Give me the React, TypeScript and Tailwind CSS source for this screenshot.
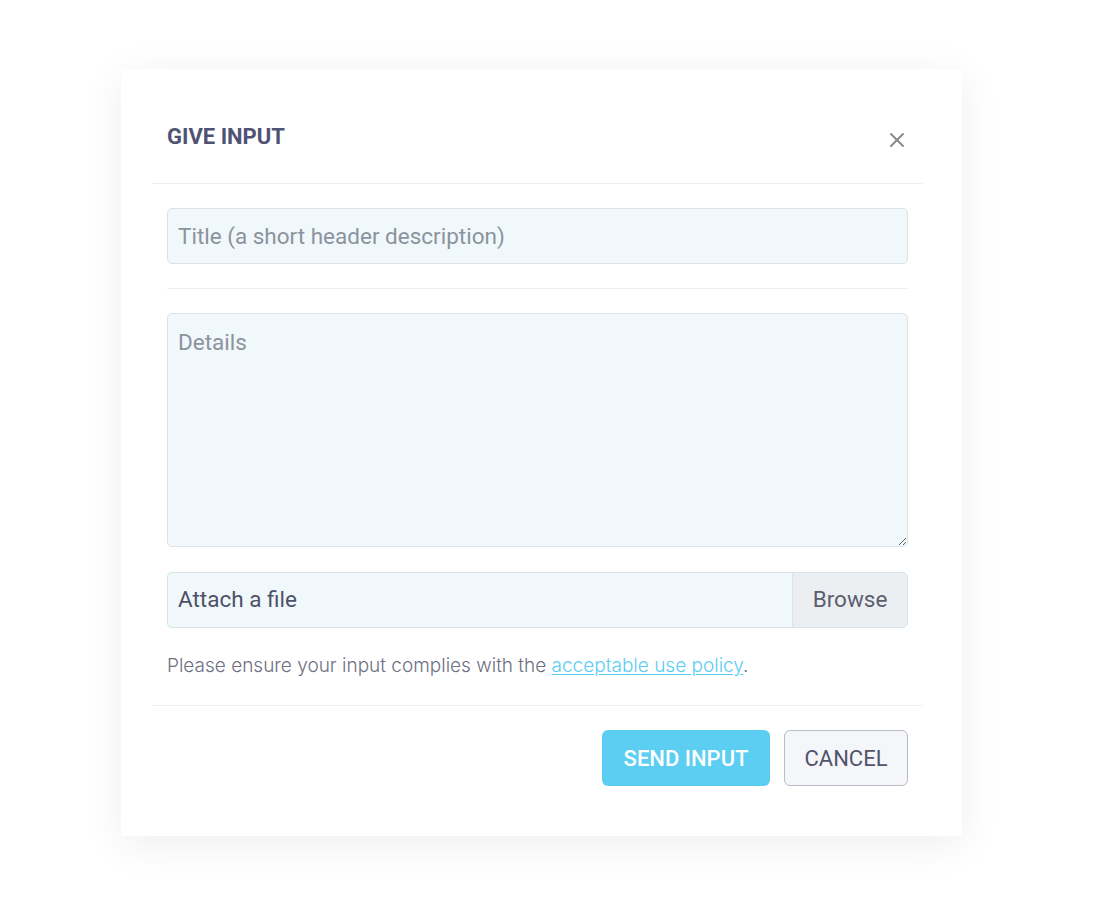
import { X } from 'lucide-react'

export default function App() {
  return (
    <div className="min-h-[908px] bg-white pt-[69px] pl-[121px] font-['Roboto',sans-serif]">
      <div className="w-[841px] bg-white pl-[31px] pr-[39px] pb-[50px] shadow-[0_8px_40px_rgba(0,0,0,0.07)]">
        {/* Header */}
        <div className="flex h-[115px] items-center justify-between border-b border-[#eceef1] pl-[15px] pr-[14px] pt-[22px]">
          <h2 className="text-[22px] leading-[26px] font-bold text-[#4f5373]">GIVE INPUT</h2>
          <button className="flex h-[26px] translate-y-[3px] items-center text-[#8a8a8a]">
            <X size={24} strokeWidth={2} />
          </button>
        </div>

        {/* Body */}
        <div className="px-[15px] pt-[24px] pb-[27px]">
          <input
            className="block h-[56px] w-full rounded-[5px] border border-[#dbe2e8] bg-[#f0f8fc] px-[10px] text-[22.5px] text-[#4e5268] outline-none placeholder:text-[#8b939c]"
            placeholder="Title (a short header description)"
          />
          <div className="my-[24px] h-px bg-[#eceef1]" />
          <textarea
            className="block h-[234px] w-full rounded-[5px] border border-[#dbe2e8] bg-[#f0f8fc] px-[10px] py-[13px] text-[22.5px] leading-[30px] text-[#4e5268] outline-none placeholder:text-[#8b939c]"
            placeholder="Details"
          />
          <div className="mt-[25px] flex h-[56px] overflow-hidden rounded-[5px] border border-[#dbe2e8] bg-[#f0f8fc]">
            <div className="flex flex-1 items-center px-[10px] text-[22.5px] text-[#4e5268]">Attach a file</div>
            <div className="flex w-[115px] items-center justify-center border-l border-[#dbe2e8] bg-[#eceff2] text-[22.5px] text-[#5a5e6e]">
              Browse
            </div>
          </div>
          <p className="mt-[26px] font-['Inter',sans-serif] text-[19px] leading-[24px] font-light text-[#6d7182]">
            Please ensure your input complies with the{' '}
            <a href="#" className="text-[#5bcdf2] underline underline-offset-2">
              acceptable use policy
            </a>
            .
          </p>
        </div>

        {/* Footer */}
        <div className="flex justify-end gap-[14px] border-t border-[#eceef1] px-[15px] pt-[24px]">
          <button className="h-[56px] w-[168px] rounded-[6px] bg-[#5bcef2] text-[22px] font-medium text-white">
            SEND INPUT
          </button>
          <button className="h-[56px] w-[124px] rounded-[6px] border border-[#b9bdc6] bg-[#f5f6f9] text-[22px] text-[#50546a]">
            CANCEL
          </button>
        </div>
      </div>
    </div>
  )
}
